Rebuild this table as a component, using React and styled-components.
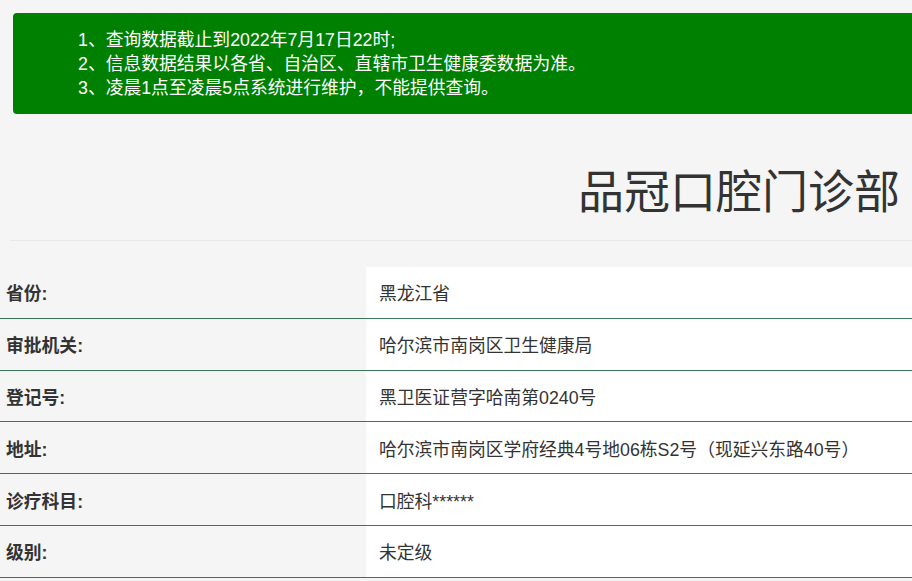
import React from "react";
import styled, {createGlobalStyle} from "styled-components";

const GlobalStyle = createGlobalStyle`
  html, body {
    margin: 0;
    padding: 0;
    background: #f5f5f5;
    font-family: "Liberation Sans", "Noto Sans CJK SC", sans-serif;
    color: #333;
    overflow: hidden;
  }
`

const Page = styled.div`
  width: 912px;
  min-height: 581px;
`

const Notice = styled.div`
  margin: 13px 0 0 13px;
  padding: 15px 0 14px 65px;
  background: #008000;
  border-radius: 4px 0 0 4px;
  color: #fff;
  font-size: 17.8px;
  line-height: 24px;
`

const NoticeLine = styled.div`
  white-space: nowrap;
`

const Header = styled.div`
  margin: 52px 0 0 10px;
  padding: 0 12px 22px 0;
  border-bottom: 1px solid #e8e8e8;
  text-align: right;
`

const Title = styled.h1`
  margin: 0;
  font-size: 46px;
  font-weight: normal;
  line-height: 52px;
  color: #333;
`

const Table = styled.div`
  margin-top: 26px;
`

const Row = styled.div`
  display: grid;
  grid-template-columns: 366px 1fr;
  height: 50.8px;
  border-bottom: 1px solid #3b7657;
`

const Label = styled.div`
  display: flex;
  align-items: center;
  padding-left: 6px;
  font-size: 17.8px;
  font-weight: bold;
  color: #333;
  background: #f5f5f5;
`

const Value = styled.div`
  display: flex;
  align-items: center;
  padding-left: 13px;
  font-size: 17.8px;
  color: #333;
  background: #fff;
`

const notices = [
    "1、查询数据截止到2022年7月17日22时;",
    "2、信息数据结果以各省、自治区、直辖市卫生健康委数据为准。",
    "3、凌晨1点至凌晨5点系统进行维护，不能提供查询。",
]

const rows = [
    ["省份:", "黑龙江省"],
    ["审批机关:", "哈尔滨市南岗区卫生健康局"],
    ["登记号:", "黑卫医证营字哈南第0240号"],
    ["地址:", "哈尔滨市南岗区学府经典4号地06栋S2号（现延兴东路40号）"],
    ["诊疗科目:", "口腔科******"],
    ["级别:", "未定级"],
]

export default function App() {
    return (
        <Page>
            <GlobalStyle/>
            <Notice>
                {notices.map(n => <NoticeLine key={n}>{n}</NoticeLine>)}
            </Notice>
            <Header>
                <Title>品冠口腔门诊部</Title>
            </Header>
            <Table>
                {rows.map(([label, value]) => (
                    <Row key={label}>
                        <Label>{label}</Label>
                        <Value>{value}</Value>
                    </Row>
                ))}
            </Table>
        </Page>
    )
}
